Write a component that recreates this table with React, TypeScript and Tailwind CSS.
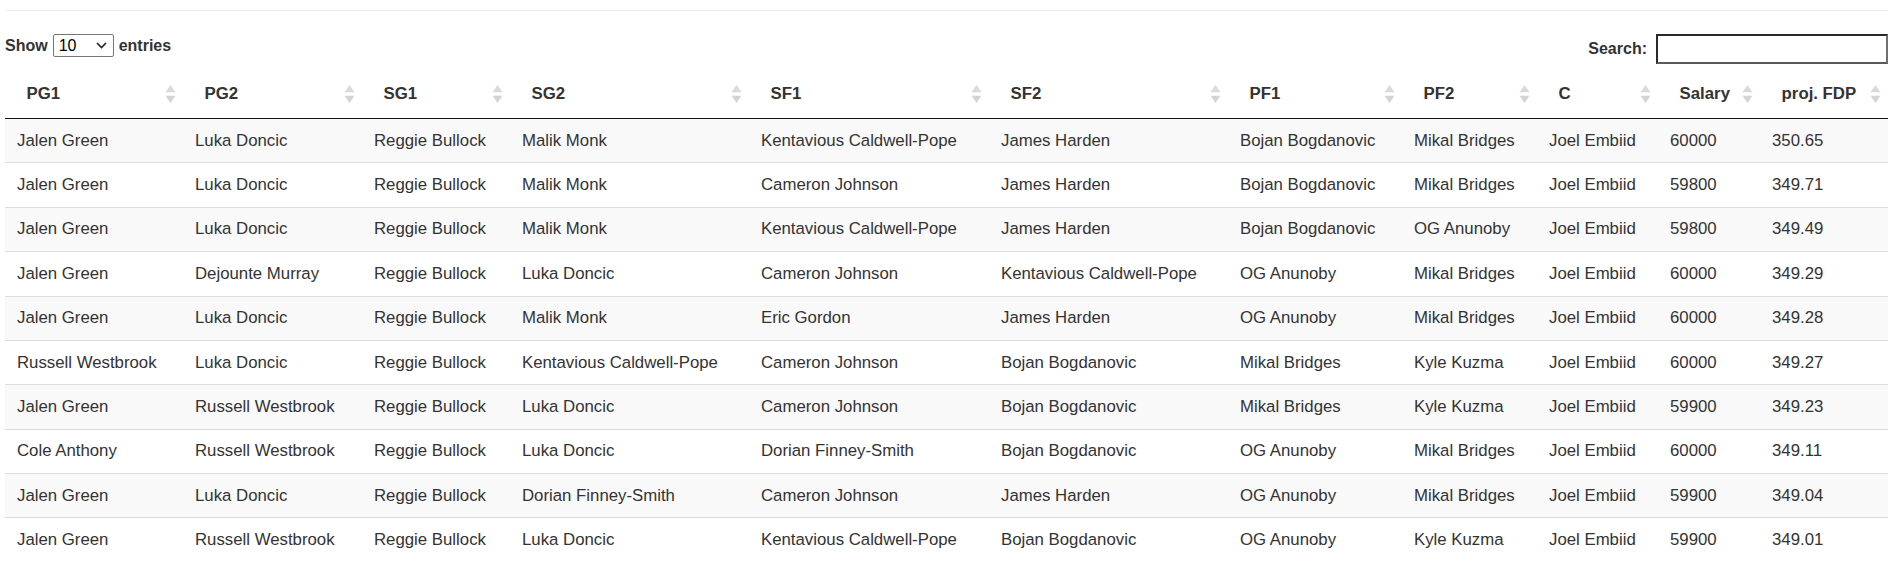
import React from "react";

const headers = ["PG1", "PG2", "SG1", "SG2", "SF1", "SF2", "PF1", "PF2", "C", "Salary", "proj. FDP"];
const widths = [178, 179, 148, 239, 240, 239, 174, 135, 121, 102, 129];

const rows: string[][] = [
  ["Jalen Green", "Luka Doncic", "Reggie Bullock", "Malik Monk", "Kentavious Caldwell-Pope", "James Harden", "Bojan Bogdanovic", "Mikal Bridges", "Joel Embiid", "60000", "350.65"],
  ["Jalen Green", "Luka Doncic", "Reggie Bullock", "Malik Monk", "Cameron Johnson", "James Harden", "Bojan Bogdanovic", "Mikal Bridges", "Joel Embiid", "59800", "349.71"],
  ["Jalen Green", "Luka Doncic", "Reggie Bullock", "Malik Monk", "Kentavious Caldwell-Pope", "James Harden", "Bojan Bogdanovic", "OG Anunoby", "Joel Embiid", "59800", "349.49"],
  ["Jalen Green", "Dejounte Murray", "Reggie Bullock", "Luka Doncic", "Cameron Johnson", "Kentavious Caldwell-Pope", "OG Anunoby", "Mikal Bridges", "Joel Embiid", "60000", "349.29"],
  ["Jalen Green", "Luka Doncic", "Reggie Bullock", "Malik Monk", "Eric Gordon", "James Harden", "OG Anunoby", "Mikal Bridges", "Joel Embiid", "60000", "349.28"],
  ["Russell Westbrook", "Luka Doncic", "Reggie Bullock", "Kentavious Caldwell-Pope", "Cameron Johnson", "Bojan Bogdanovic", "Mikal Bridges", "Kyle Kuzma", "Joel Embiid", "60000", "349.27"],
  ["Jalen Green", "Russell Westbrook", "Reggie Bullock", "Luka Doncic", "Cameron Johnson", "Bojan Bogdanovic", "Mikal Bridges", "Kyle Kuzma", "Joel Embiid", "59900", "349.23"],
  ["Cole Anthony", "Russell Westbrook", "Reggie Bullock", "Luka Doncic", "Dorian Finney-Smith", "Bojan Bogdanovic", "OG Anunoby", "Mikal Bridges", "Joel Embiid", "60000", "349.11"],
  ["Jalen Green", "Luka Doncic", "Reggie Bullock", "Dorian Finney-Smith", "Cameron Johnson", "James Harden", "OG Anunoby", "Mikal Bridges", "Joel Embiid", "59900", "349.04"],
  ["Jalen Green", "Russell Westbrook", "Reggie Bullock", "Luka Doncic", "Kentavious Caldwell-Pope", "Bojan Bogdanovic", "OG Anunoby", "Kyle Kuzma", "Joel Embiid", "59900", "349.01"],
];

function SortBoth() {
  return (
    <svg width="11" height="19" viewBox="0 0 11 19" className="absolute right-[7px] top-1/2 -translate-y-1/2">
      <path d="M5.5 0.5 L10.5 7.8 L0.5 7.8 Z" fill="#dadada" />
      <path d="M5.5 18.5 L10.5 11.2 L0.5 11.2 Z" fill="#d4d4d4" />
    </svg>
  );
}

export default function App() {
  return (
    <div className="min-h-screen bg-white pl-[5px] pr-[5px] text-[#333]" style={{ fontFamily: '"Liberation Sans", Arial, Helvetica, sans-serif' }}>
      <div className="pt-[10px]">
        <div className="border-t border-[#eeeeee]" />
      </div>
      <div className="mt-[23px] flex items-start justify-between">
        <div className="flex h-[23px] items-center text-[16px] font-bold leading-none">
          <span>Show</span>
          <div className="ml-[5px] flex h-[23px] w-[61px] items-center justify-between rounded-[2px] border border-[#767676] bg-white pl-[5px] pr-[6px] font-normal text-black">
            <span className="text-[16px]">10</span>
            <svg width="11" height="7" viewBox="0 0 11 7">
              <path d="M1 1 L5.5 5.5 L10 1" stroke="#222" strokeWidth="1.6" fill="none" />
            </svg>
          </div>
          <span className="ml-[5px]">entries</span>
        </div>
        <div className="flex h-[30px] items-center text-[16px] font-bold leading-none">
          <span>Search:</span>
          <div className="ml-[9px] h-[30px] w-[232px] border-2 border-t-[#2a2a2a] border-l-[#2a2a2a] border-r-[#707070] border-b-[#5a5a5a] bg-white" />
        </div>
      </div>
      <table className="mt-[6px] w-full table-fixed border-separate border-spacing-0 text-[16.8px] leading-[24px]">
        <colgroup>
          {widths.map((w, i) => (
            <col key={i} style={{ width: i === widths.length - 1 ? undefined : w }} />
          ))}
        </colgroup>
        <thead>
          <tr>
            {headers.map((h) => (
              <th key={h} className="relative border-b border-[#111] py-[12px] pl-[21.6px] pr-[21.6px] text-left font-bold whitespace-nowrap">
                {h}
                <SortBoth />
              </th>
            ))}
          </tr>
        </thead>
        <tbody>
          {rows.map((r, i) => (
            <tr key={i} className={i % 2 === 0 ? "bg-[#f9f9f9]" : "bg-white"}>
              {r.map((c, j) => (
                <td key={j} className={`px-[12px] py-[9.7px] whitespace-nowrap ${i === 0 ? "" : "border-t border-[#dddddd]"}`}>
                  {c}
                </td>
              ))}
            </tr>
          ))}
        </tbody>
      </table>
    </div>
  );
}
